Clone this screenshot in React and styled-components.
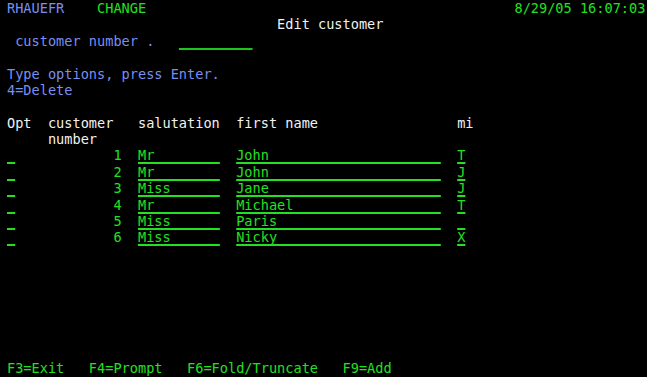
import React from "react";
import styled, { createGlobalStyle } from "styled-components";

const COLORS = {
  blue: "#7a8ff2",
  green: "#22e022",
  white: "#f2f2f2",
  dim: "#1cc41c",
};

const Global = createGlobalStyle`
  html, body {
    margin: 0;
    padding: 0;
    background: #000;
  }
  body {
    width: 647px;
    height: 377px;
    overflow: hidden;
  }
`;

const Screen = styled.div`
  display: flex;
  flex-direction: column;
  width: 647px;
  height: 377px;
  background: #000;
  padding-left: 7px;
  box-sizing: border-box;
  font-family: "DejaVu Sans Mono", "Liberation Mono", monospace;
  font-size: 13.6px;
  overflow: hidden;
`;

const Row = styled.div`
  height: 16.38px;
  line-height: 16.38px;
  white-space: pre;
  flex: none;
`;

const Text = styled.span`
  color: ${(p) => COLORS[p.$c || "green"]};
`;

const Field = styled.span`
  color: ${(p) => COLORS[p.$c || "green"]};
  text-decoration: underline;
  text-decoration-color: ${(p) => COLORS[p.$line || p.$c || "green"]};
  text-decoration-thickness: 2px;
  text-underline-offset: 2px;
  text-decoration-skip-ink: none;
`;

const customers = [
  { n: 1, sal: "Mr", first: "John", mi: "T" },
  { n: 2, sal: "Mr", first: "John", mi: "J" },
  { n: 3, sal: "Miss", first: "Jane", mi: "J" },
  { n: 4, sal: "Mr", first: "Michael", mi: "T" },
  { n: 5, sal: "Miss", first: "Paris", mi: " " },
  { n: 6, sal: "Miss", first: "Nicky", mi: "X" },
];

const sp = (n) => " ".repeat(n);

export default function App() {
  return (
    <>
      <Global />
      <Screen>
        <Row>
          <Text $c="blue">RHAUEFR</Text>
          {sp(4)}
          <Text $c="green">CHANGE</Text>
          {sp(45)}
          <Text $c="green">8/29/05 16:07:03</Text>
        </Row>
        <Row>
          {sp(33)}
          <Text $c="white">Edit customer</Text>
        </Row>
        <Row>
          <Text $c="blue"> customer number .</Text>
          {sp(3)}
          <Field $c="green" $line="dim">{sp(9)}</Field>
        </Row>
        <Row />
        <Row>
          <Text $c="blue">Type options, press Enter.</Text>
        </Row>
        <Row>
          <Text $c="blue">4=Delete</Text>
        </Row>
        <Row />
        <Row>
          <Text $c="white">
            {"Opt  customer   salutation  first name" + sp(17) + "mi"}
          </Text>
        </Row>
        <Row>
          <Text $c="white">{sp(5) + "number"}</Text>
        </Row>
        {customers.map((c) => (
          <Row key={c.n}>
            <Field>{" "}</Field>
            <Text>{String(c.n).padStart(13)}</Text>
            {sp(2)}
            <Field>{c.sal.padEnd(10)}</Field>
            {sp(2)}
            <Field>{c.first.padEnd(25)}</Field>
            {sp(2)}
            <Field>{c.mi}</Field>
          </Row>
        ))}
        <Row />
        <Row />
        <Row />
        <Row />
        <Row />
        <Row />
        <Row />
        <Row>
          <Text $c="green">
            {"F3=Exit   F4=Prompt   F6=Fold/Truncate   F9=Add"}
          </Text>
        </Row>
      </Screen>
    </>
  );
}
